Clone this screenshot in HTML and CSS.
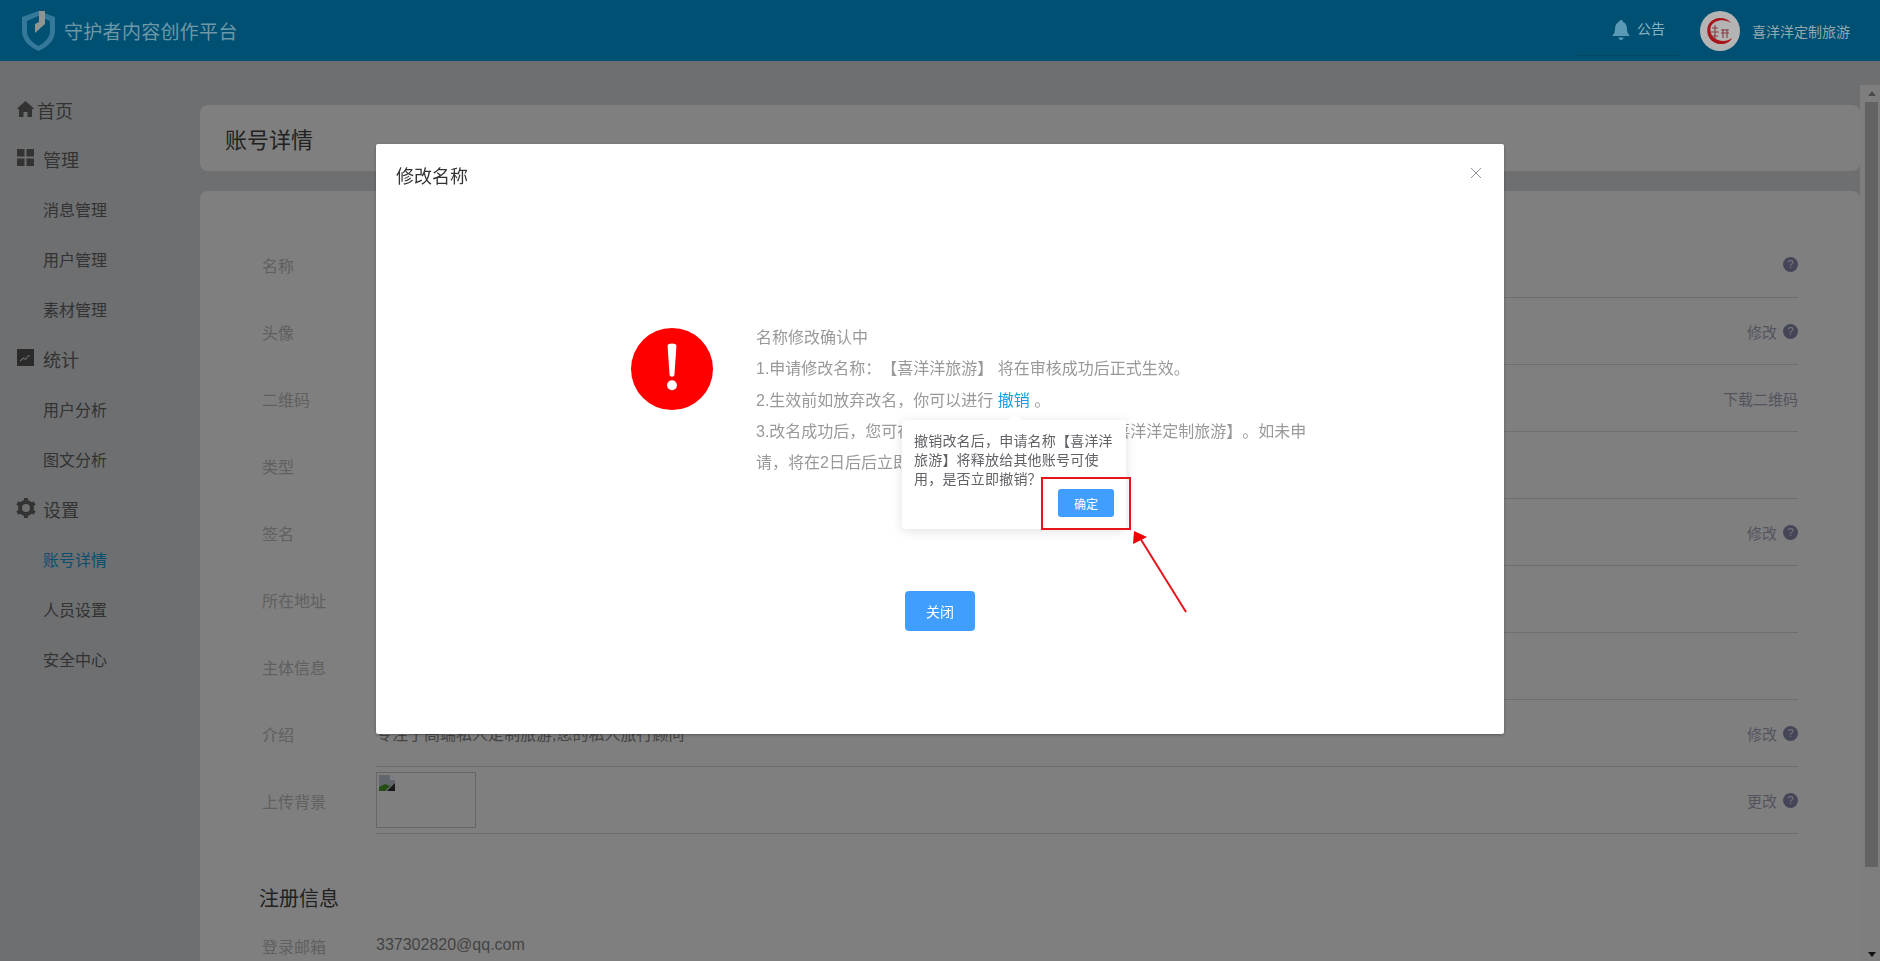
FILE: index.html
```html
<!DOCTYPE html>
<html lang="zh-CN">
<head>
    <meta charset="UTF-8">
    <title>账号详情</title>
    <link rel="stylesheet" href="styles.css">
</head>
<body>

    <header class="topbar">
        <div class="brand">
            <svg class="brand-logo" width="33" height="40" viewBox="0 0 33 40">
                <path fill-rule="evenodd" d="M16.500 0 L33 6 V20 C33 29 26 36 16.500 40 C7 36 0 29 0 20 V6 Z M16.500 5 L5 10 V20 C5 27 11 32 16.500 35 C22 32 28 27 28 20 V10 Z" fill="#34789a"/>
                <path d="M17 0 L23 0 L23 13 L13 22 L13 13 L17 11 Z" fill="#8f9590"/>
            </svg>
            <span class="brand-name">守护者内容创作平台</span>
        </div>
        <div class="topbar-right">
            <div class="notice">
                <svg width="18" height="20" viewBox="0 0 18 20">
                    <path d="M9 0 C10.300 0 11 1 11 2 C14 3 15 6 15 9 C15 12 16 14 18 16 L0 16 C2 14 3 12 3 9 C3 6 4 3 7 2 C7 1 7.700 0 9 0 Z M6.500 17.500 L11.500 17.500 C11.500 19 10.500 20 9 20 C7.500 20 6.500 19 6.500 17.500 Z" fill="#5a9ab6"/>
                </svg>
                <span>公告</span>
            </div>
            <div class="account">
                <svg class="avatar" width="40" height="40" viewBox="0 0 40 40">
                    <circle cx="20" cy="20" r="20" fill="#b4b4b4"/>
                    <path d="M31 12 C26 5 12 5 8 15 C5 25 12 33 21 33 C26 33 30 31 32 27 C28 30 23 31 18 29 C12 27 9 21 11 15 C14 9 24 7 31 12 Z" fill="#a8141a"/>
                    <path d="M15 14 L15 28 M12 17 L18 17 M11 21 L19 21 M12 25 L18 25 M23 18 L23 27 M27 18 L27 27 M21 22 L29 22 M21 19 L29 19" stroke="#8c3a40" stroke-width="1.100" fill="none"/>
                </svg>
                <span>喜洋洋定制旅游</span>
            </div>
        </div>
    </header>

    <div class="page">
        <nav class="sidebar">
            <div class="nav-group first">
                <svg width="17" height="16" viewBox="0 0 17 16"><path d="M8.500 0 L17 7.500 L15 8.500 L15 16 L10.500 16 L10.500 11 L6.500 11 L6.500 16 L2 16 L2 8.500 L0 7.500 Z" fill="#666"/></svg>
                <span>首页</span>
            </div>
            <div class="nav-group">
                <svg width="17" height="17" viewBox="0 0 17 17"><path d="M0 0 H7.500 V7.500 H0 Z M9.500 0 H17 V7.500 H9.500 Z M0 9.500 H7.500 V17 H0 Z M9.500 9.500 H17 V17 H9.500 Z" fill="#666"/></svg>
                <span>管理</span>
            </div>
            <a class="nav-item">消息管理</a>
            <a class="nav-item">用户管理</a>
            <a class="nav-item">素材管理</a>
            <div class="nav-group">
                <svg width="17" height="17" viewBox="0 0 17 17"><rect width="17" height="17" fill="#555"/><path d="M3 12 L6.500 9 L8.500 10.500 L11 7 L13 6.500" stroke="#ccc" stroke-width="1.200" fill="none"/></svg>
                <span>统计</span>
            </div>
            <a class="nav-item">用户分析</a>
            <a class="nav-item">图文分析</a>
            <div class="nav-group">
                <svg class="gear" width="20" height="20" viewBox="0 0 20 20"><circle cx="10" cy="10" r="6" fill="none" stroke="#666" stroke-width="4"/><path d="M10 0 V4 M10 16 V20 M1.300 5 L4.800 7 M15.200 13 L18.700 15 M1.300 15 L4.800 13 M15.200 7 L18.700 5" stroke="#666" stroke-width="4"/></svg>
                <span>设置</span>
            </div>
            <a class="nav-item active">账号详情</a>
            <a class="nav-item">人员设置</a>
            <a class="nav-item">安全中心</a>
        </nav>

        <main class="content">
            <div class="title-card">账号详情</div>
            <div class="detail-card">
                <div class="row">
                    <div class="row-label">名称</div>
                    <div class="row-body"><span>喜洋洋定制旅游</span><div class="row-action"><i class="help">?</i></div></div>
                </div>
                <div class="row">
                    <div class="row-label">头像</div>
                    <div class="row-body"><span></span><div class="row-action">修改<i class="help">?</i></div></div>
                </div>
                <div class="row">
                    <div class="row-label">二维码</div>
                    <div class="row-body"><span></span><div class="row-action">下载二维码</div></div>
                </div>
                <div class="row">
                    <div class="row-label">类型</div>
                    <div class="row-body"><span>订阅号</span></div>
                </div>
                <div class="row">
                    <div class="row-label">签名</div>
                    <div class="row-body"><span></span><div class="row-action">修改<i class="help">?</i></div></div>
                </div>
                <div class="row">
                    <div class="row-label">所在地址</div>
                    <div class="row-body"><span></span></div>
                </div>
                <div class="row">
                    <div class="row-label">主体信息</div>
                    <div class="row-body"><span></span></div>
                </div>
                <div class="row">
                    <div class="row-label">介绍</div>
                    <div class="row-body"><span>专注于高端私人定制旅游,您的私人旅行顾问</span><div class="row-action">修改<i class="help">?</i></div></div>
                </div>
                <div class="row">
                    <div class="row-label">上传背景</div>
                    <div class="row-body">
                        <div class="bg-thumb">
                            <svg width="16" height="16" viewBox="0 0 16 16">
                                <path d="M0 0 H11 L16 5 V16 H0 Z" fill="#c3cbd8"/>
                                <path d="M0 16 L0 12 L6 9 L11 11 L6 16 Z" fill="#4f9a2f"/>
                                <path d="M8 16 L16 8 V16 Z" fill="#333"/>
                                <path d="M11 0 L11 5 L16 5 Z" fill="#fff"/>
                            </svg>
                        </div>
                        <div class="row-action">更改<i class="help">?</i></div>
                    </div>
                </div>
                <h3 class="section-title">注册信息</h3>
                <div class="row plain">
                    <div class="row-label">登录邮箱</div>
                    <div class="row-email">337302820@qq.com</div>
                </div>
            </div>
        </main>

        <div class="scrollbar">
            <span class="arrow-up"></span>
            <div class="scroll-thumb"></div>
            <span class="arrow-down"></span>
        </div>
    </div>

    <div class="mask"></div>

    <div class="dialog-wrap">
        <div class="dialog">
            <div class="dialog-head">
                <span>修改名称</span>
                <svg width="12" height="12" viewBox="0 0 12 12"><path d="M1 1 L11 11 M11 1 L1 11" stroke="#909399" stroke-width="1"/></svg>
            </div>
            <div class="dialog-body">
                <svg class="warn-icon" width="82" height="82" viewBox="0 0 83 83">
                    <circle cx="41.500" cy="41.500" r="41.500" fill="#fe0000"/>
                    <path d="M37 18 C37 15 46 15 46 18 L44 47 C44 50 39 50 39 47 Z" fill="#fff"/>
                    <circle cx="41.500" cy="58" r="5" fill="#fff"/>
                </svg>
                <div class="warn-text">
                    <p>名称修改确认中</p>
                    <p>1.申请修改名称：【喜洋洋旅游】 将在审核成功后正式生效。</p>
                    <p>2.生效前如放弃改名，你可以进行 <a class="link">撤销</a> 。</p>
                    <p>3.改名成功后，您可在2日内申请恢复原账号名称【喜洋洋定制旅游】。如未申请，将在2日后后立即生效该名称。</p>
                </div>
            </div>
            <div class="dialog-foot">
                <button class="btn">关闭</button>
            </div>

            <!-- popover under the 撤销 link -->
            <div class="popover">
                <p>撤销改名后，申请名称【喜洋洋旅游】将释放给其他账号可使用，是否立即撤销？</p>
                <div class="popover-foot"><button class="btn-small">确定</button></div>
            </div>
        </div>
    </div>

    <!-- red marks drawn over the screenshot -->
    <div class="mark-box"></div>
    <svg class="mark-arrow" width="70" height="95" viewBox="0 0 70 95">
        <path d="M8 8 L54 82" stroke="#e8141c" stroke-width="2" fill="none"/>
        <path d="M2 1 L15 7 L1 14 Z" fill="#f00000"/>
    </svg>

</body>
</html>
```

FILE: styles.css
```css
* {
    box-sizing: border-box;
}

html, body {
    height: 100%;
}

body {
    margin: 0;
    overflow: hidden;
    font-family: "Liberation Sans", "Noto Sans CJK SC", sans-serif;
    font-size: 16px;
    color: #666;
    background-color: #dcdee0;
    text-spacing-trim: space-all;
}

p {
    margin: 0;
}

/* top bar sits above the mask, its colours are the dimmed ones */
.topbar {
    position: relative;
    z-index: 5;
    display: flex;
    justify-content: space-between;
    align-items: center;
    height: 61px;
    padding: 0 30px 0 22px;
    background-color: #005073;
}

.brand {
    display: flex;
    align-items: center;
    gap: 9px;
}

.brand-name {
    font-size: 19px;
    letter-spacing: 0.3px;
    color: #6f98a6;
    white-space: nowrap;
}

.topbar-right {
    display: flex;
    align-items: center;
}

.notice {
    display: flex;
    align-items: center;
    gap: 7px;
    height: 50px;
    width: 102px;
    margin-right: 21px;
    padding: 0 0 1px 35px;
    font-size: 14px;
    color: #8ab0c0;
    border-bottom: 1px solid #004562;
}

.notice span {
    margin-bottom: 3px;
}

.account {
    display: flex;
    align-items: center;
    gap: 12px;
    font-size: 14px;
    color: #94a8b0;
}

/* sidebar */
.page {
    display: flex;
    height: 900px;
}

.sidebar {
    flex: none;
    width: 200px;
    padding: 24px 0 0 17px;
}

.nav-group,
.nav-item {
    display: flex;
    align-items: center;
    height: 50px;
    padding-bottom: 2px;
}

.nav-group {
    gap: 9px;
    font-size: 18px;
    color: #666;
}

.nav-group svg {
    margin-bottom: 3px;
}

.nav-group .gear {
    margin-left: -1px;
    margin-right: -2px;
}

.nav-group.first {
    gap: 3px;
    padding-bottom: 0;
}

.nav-item {
    padding-left: 26px;
    font-size: 16px;
    color: #666;
}

.nav-item.active {
    color: #12a0e0;
}

/* main column */
.content {
    flex: none;
    width: 1660px;
    padding-top: 44px;
}

.title-card {
    display: flex;
    align-items: center;
    height: 66px;
    padding-left: 25px;
    margin-bottom: 20px;
    font-size: 22px;
    color: #444;
    background-color: #fff;
    border-radius: 8px;
}

.detail-card {
    height: 900px;
    padding: 40px 62px 0;
    background-color: #fff;
    border-radius: 8px;
}

.row {
    display: flex;
    height: 67px;
}

.row-label {
    flex: none;
    width: 114px;
    padding-top: 22px;
    color: #c0c0c0;
}

.row-body {
    flex: 1;
    display: flex;
    justify-content: space-between;
    align-items: center;
    border-bottom: 1px solid #dcdcdc;
    color: #888;
}

.row-action {
    display: flex;
    align-items: center;
    gap: 6px;
    font-size: 15px;
    color: #a8a8bc;
}

.help {
    display: block;
    width: 15px;
    height: 15px;
    font-size: 11px;
    font-style: normal;
    line-height: 15px;
    text-align: center;
    color: #f0f0f8;
    background-color: #8a8ab0;
    border-radius: 50%;
}

.bg-thumb {
    width: 100px;
    height: 56px;
    padding: 2px 0 0 2px;
    border: 1px solid #ccc;
}

.bg-thumb svg {
    display: block;
}

.section-title {
    margin: 45px 0 0 -3px;
    font-size: 20px;
    font-weight: 400;
    line-height: 40px;
    color: #444;
}

.row.plain {
    height: auto;
}

.row.plain .row-label {
    padding-top: 15px;
}

.row-email {
    padding-top: 17px;
    color: #888;
}

/* scrollbar painted as in the capture */
.scrollbar {
    flex: none;
    display: flex;
    flex-direction: column;
    align-items: center;
    width: 20px;
    height: 876px;
    margin-top: 24px;
    padding: 6px 2px 0 5px;
    background-color: #fcfcfc;
}

.arrow-up,
.arrow-down {
    flex: none;
    width: 0;
    height: 0;
    border-left: 4px solid transparent;
    border-right: 4px solid transparent;
}

.arrow-up {
    border-bottom: 5px solid #999;
}

.arrow-down {
    margin-top: 85px;
    border-top: 5px solid #222;
}

.scroll-thumb {
    flex: none;
    width: 13px;
    height: 765px;
    margin-top: 6px;
    background-color: #c6c6c6;
}

/* dialog */
.mask {
    position: fixed;
    inset: 0;
    background-color: rgba(0, 0, 0, 0.5);
}

.dialog-wrap {
    position: fixed;
    inset: 0;
    padding-top: 144px;
}

.dialog {
    position: relative;
    width: 1128px;
    height: 590px;
    margin: 0 auto;
    background-color: #fff;
    border-radius: 2px;
    box-shadow: 0 1px 3px rgba(0, 0, 0, 0.3);
}

.dialog-head {
    display: flex;
    justify-content: space-between;
    align-items: center;
    height: 60px;
    padding: 1px 22px 0 20px;
    font-size: 18px;
    color: #333;
}

.dialog-head svg {
    margin-bottom: 4px;
}

.dialog-body {
    display: flex;
    padding: 118px 0 0 255px;
}

.warn-icon {
    flex: none;
    margin-top: 6px;
}

.warn-text {
    width: 565px;
    margin-left: 43px;
    line-height: 31.300px;
    color: #999;
}

.link {
    color: #12a0e0;
}

.dialog-foot {
    display: flex;
    justify-content: center;
    margin-top: 113px;
}

.btn {
    width: 70px;
    height: 40px;
    padding: 0;
    font-family: inherit;
    font-size: 14px;
    color: #fff;
    background-color: #409eff;
    border: none;
    border-radius: 4px;
}

.popover {
    position: absolute;
    left: 526px;
    top: 276px;
    width: 224px;
    height: 109px;
    padding: 12px;
    font-size: 14px;
    line-height: 19px;
    color: #606266;
    background-color: #fff;
    border-radius: 4px;
    box-shadow: 0 2px 12px rgba(0, 0, 0, 0.12);
}

.popover::before {
    content: "";
    position: absolute;
    left: 108px;
    top: -5px;
    width: 10px;
    height: 10px;
    background-color: #fff;
    transform: rotate(45deg);
}

.popover p {
    position: relative;
    letter-spacing: 0.2px;
}

.popover-foot {
    display: flex;
    justify-content: flex-end;
}

.btn-small {
    width: 56px;
    height: 28px;
    padding: 0;
    font-family: inherit;
    font-size: 12px;
    color: #fff;
    background-color: #409eff;
    border: none;
    border-radius: 3px;
}

.mark-box {
    position: fixed;
    left: 1041px;
    top: 477px;
    width: 90px;
    height: 53px;
    border: 2px solid #e8141c;
}

.mark-arrow {
    position: fixed;
    left: 1132px;
    top: 530px;
}
```
